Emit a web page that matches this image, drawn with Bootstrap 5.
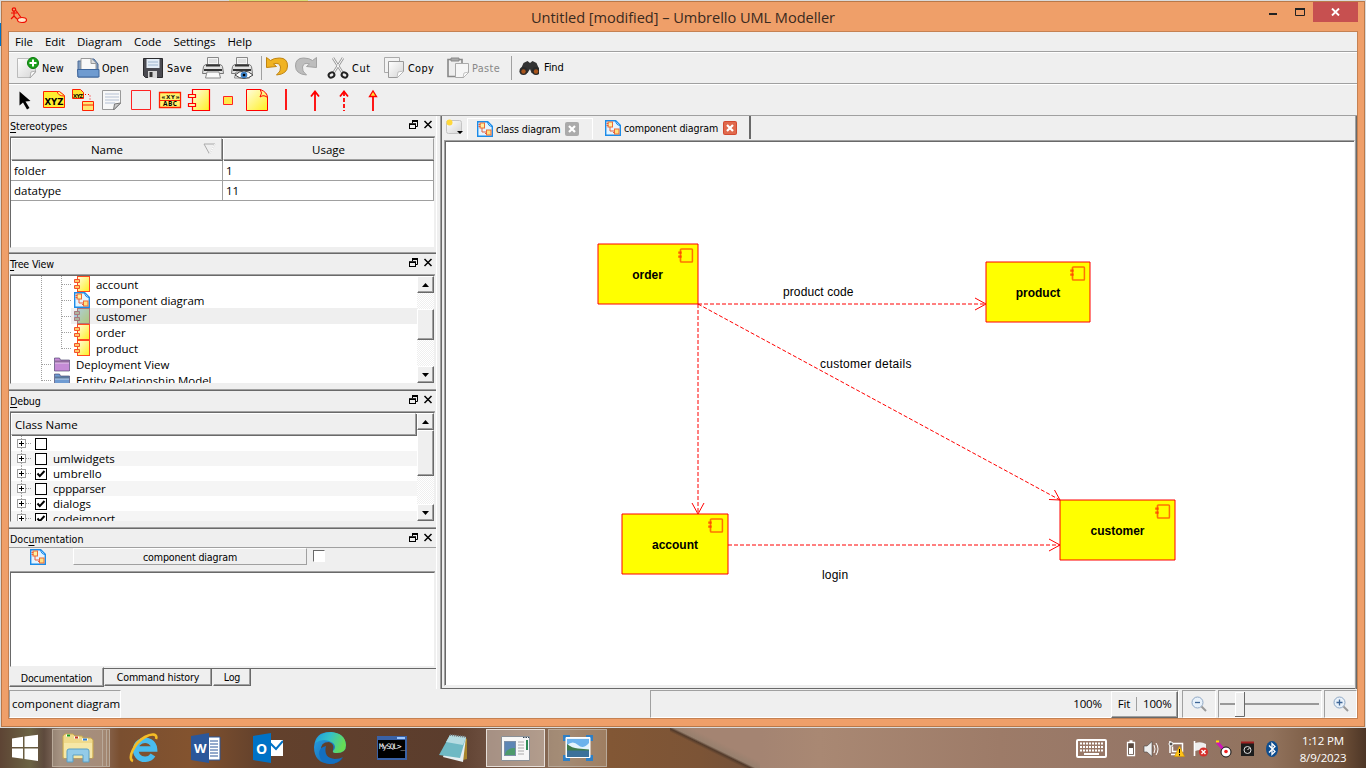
<!DOCTYPE html>
<html lang="en">
<head>
<meta charset="utf-8">
<title>Untitled [modified] – Umbrello UML Modeller</title>
<link href="https://cdn.jsdelivr.net/npm/bootstrap@5.3.0/dist/css/bootstrap.min.css" rel="stylesheet">
<script src="https://cdn.jsdelivr.net/npm/bootstrap@5.3.0/dist/js/bootstrap.bundle.min.js"></script>
<style>
:root{--face:#efefef;--sh:#a0a0a0;--dk:#696969}
html,body{width:1366px;height:768px;overflow:hidden}
body{font:11.5px/16px "Open Sans","Noto Sans",sans-serif;color:#000;background:#d9dadb;white-space:nowrap}
svg{display:block;flex:none}
.tah{font-family:"DejaVu Sans Condensed","DejaVu Sans",sans-serif;font-stretch:condensed;font-size:10.6px;letter-spacing:-.15px}
.desk{height:728px;padding:1px 1px 1px 1px;background:linear-gradient(#0072c6,#0072c6) 0 23px/1px 23px no-repeat,linear-gradient(#d6dd74,#d6dd74) 229px 0/79px 1px no-repeat,#d9dadb}
.win{width:1364px;height:726px;background:#ef9f69;border:1px solid #b97849}
.titlebar{height:29px}
.titletext{font-size:14.6px;color:#3a2a20;letter-spacing:-.05px}
.closebtn{width:45px;height:20px;background:#c75050}
.client{width:1350px;height:688px;margin-left:6px;background:var(--face);border:1px solid #c58152}
.menu-row{height:21px;border-bottom:1px solid #fff;box-shadow:inset 0 -1px var(--sh);letter-spacing:-.08px}
.tool-row{height:32px;border-bottom:1px solid #fff;box-shadow:inset 0 -1px var(--sh)}
.tool-row2{height:31px;border-bottom:1px solid var(--sh)}
.menu-row span{margin-right:12px}
.dock{width:428px;border-right:1px solid #fff}
.dock-title{height:19px;padding:0 3px 0 1px}
.dock-title u{text-underline-offset:2px}
.panel{border-bottom:1px solid var(--dk);box-shadow:inset 0 -1px var(--sh)}
.sunk{border:1px solid;border-color:var(--dk) #efefef #efefef var(--dk);background:#fff;margin:0 1px 0 1px;overflow:hidden;box-shadow:0 -1px var(--sh)}
.hdr{background:var(--face);border:1px solid;border-color:#fff var(--sh) var(--sh) #fff;box-shadow:1px 1px var(--dk)}
.cellx{border-right:1px solid var(--sh);border-bottom:1px solid var(--sh);height:20px;padding-left:3px;line-height:19px}
.sbar{width:17px;background:repeating-conic-gradient(#fff 0 25%,#efefef 0 50%) 0 0/2px 2px}
.raised{background:var(--face);border:1px solid;border-color:#fff var(--dk) var(--dk) #fff;box-shadow:inset -1px -1px var(--sh)}
.sbtn{width:17px;height:17px}
.tree-rows{letter-spacing:-.03px}
.trow{height:16px}
.trow span{padding:1px 0 0 6px}
.drow{height:15px}
.drow:nth-child(even){background:#f5f5f5}
.dlab{padding-left:6px}
.chk{width:12px;height:12px;border:1px solid #000;background:#fff}
.dtab{border:1px solid;border-color:transparent var(--dk) var(--dk) transparent;box-shadow:inset -1px -1px var(--sh);line-height:16px;text-align:center}
.work{border-left:1px solid var(--sh);border-right:1px solid var(--dk);box-shadow:inset 1px 0 var(--dk),inset -1px 0 var(--sh),inset 0 -1px var(--dk);width:917px}
.canvas{width:911px;height:546px;border:1px solid;border-color:var(--sh) #efefef #efefef var(--sh);box-shadow:inset 1px 1px var(--dk);background:#fff;padding:1px}
.stat{border:1px solid;border-color:var(--sh) #fff #fff var(--sh);height:28px}
.taskbar{height:40px;color:#fff;background:
 linear-gradient(26deg,transparent 0 43%,#523a2a 47%,#97806e 50%,#a48472 60%) 670px 0/90px 40px no-repeat,
 linear-gradient(90deg,#5d4434 0,#6c6344 30px,#5e4a3d 44px,#8b7465 60px,#8d6d5a 100px,#7a4f30 120px,#83532f 190px,#63412c 260px,#5b3d2d 450px,#6e5040 490px,#8a6c55 560px,#825735 610px,#7c5436 700px,#71503a 760px,#a48472 760px,#a98873 820px,#9d7b68 1000px,#937566 1180px,#92735d 1270px,#705139 1340px,#4d3626 1366px)}
.app{width:60px;height:40px;margin-right:2px}
.run-on{border:1px solid #e6ded8;background:rgba(235,225,215,.45)}
.run-off{border:1px solid #b9a999;background:rgba(225,215,195,.3)}
.clock{font-size:11.5px;line-height:17px;width:60px;letter-spacing:-.15px}
</style>
</head>
<body>
<svg width="0" height="0" class="position-absolute">
 <defs>
  <linearGradient id="yl" x1="0" y1="0" x2="1" y2="1"><stop offset="0" stop-color="#fffce0"/><stop offset="1" stop-color="#fff020"/></linearGradient>
  <linearGradient id="pg" x1="0" y1="0" x2="1" y2="1"><stop offset="0" stop-color="#fff"/><stop offset="1" stop-color="#d4d4d4"/></linearGradient>
  <linearGradient id="edg" x1="0" y1="0" x2="1" y2="1"><stop offset="0" stop-color="#2aa5e8"/><stop offset="1" stop-color="#0b54a0"/></linearGradient>
  <linearGradient id="edg2" x1="0" y1="0" x2="1" y2=".3"><stop offset="0" stop-color="#1b9de0"/><stop offset=".5" stop-color="#35c1c8"/><stop offset="1" stop-color="#66dd55"/></linearGradient>
  <symbol id="comp" viewBox="0 0 16 16"><rect x="3.500" y=".5" width="12" height="15" fill="url(#yl)" stroke="#ff4a20"/><path d="M.5 3.500h5v3h-5zM.5 9.500h5v3h-5z" fill="#ffc86a" stroke="#f4502a"/></symbol>
  <symbol id="cdiag" viewBox="0 0 16 16"><path d="M.7.7h10l4.600 4.600v10H.7z" fill="#e4f4ff" stroke="#1b8be8" stroke-width="1.400"/><path d="M10.500.5q.5 5 5 5l-5-5" fill="#9fd4ff" stroke="#1b8be8"/><rect x="3" y="2" width="4.500" height="5" fill="#fff0a0" stroke="#ee6a35"/><rect x="9.500" y="9" width="4.500" height="5" fill="#ffe080" stroke="#ee6a35"/><path d="M1.500 3.500h2M1.500 5.500h2M5 7v4h4M8 12.500h2" stroke="#e8603c" fill="none"/></symbol>
  <symbol id="dockbtns" viewBox="0 0 24 10"><path d="M3.500 3V1.500h5v5H7" fill="none" stroke="#000"/><path d="M3 1h6" stroke="#000" stroke-width="2"/><rect x=".5" y="4" width="6" height="4.500" fill="#efefef" stroke="#000"/><path d="M0 4.200h7" stroke="#000" stroke-width="1.600"/><path d="M15.500 1l7 7m0-7l-7 7" stroke="#000" stroke-width="1.500"/></symbol>
  <symbol id="plus" viewBox="0 0 24 15"><path d="M4.500 0v15M9 7.500h5" stroke="#a0a0a0" stroke-dasharray="1 1"/><rect x=".5" y="3.500" width="8" height="8" fill="#fff" stroke="#a0a0a0"/><path d="M2 7.500h5M4.500 5v5" stroke="#000"/></symbol>
  <symbol id="tick" viewBox="0 0 10 10"><path d="M1.500 4.500l2.300 2.600L8.500 2" fill="none" stroke="#000" stroke-width="2"/></symbol>
  <symbol id="up" viewBox="0 0 7 4"><path d="M3.500 0L7 4H0z"/></symbol>
  <symbol id="dn" viewBox="0 0 7 4"><path d="M3.500 4L7 0H0z"/></symbol>
  <symbol id="printer" viewBox="0 0 22 22"><path d="M5.500 .5h11v9h-11z" fill="#f4f4f4" stroke="#888"/><path d="M7 3h8M7 5h8" stroke="#ccc"/><path d="M1.500 9.500q1-2 3-2h13q2 0 3 2l1 7H.5z" fill="#e2e2e2" stroke="#777"/><path d="M4 8.500h14M2 13h18" stroke="#333" stroke-width="2"/><path d="M5 15h12l1.500 6H3.500z" fill="#fafafa" stroke="#888"/></symbol>
  <symbol id="fold" viewBox="0 0 16 15"><path d="M.5 14.500V1.500h5l1 2h9v11z" fill="currentColor" stroke="#3d3560" stroke-opacity=".6"/><path d="M1 6.500h14" stroke="#fff" stroke-opacity=".55"/><path d="M1 5h14" stroke="#333" stroke-opacity=".35" stroke-width="2"/></symbol>
  <symbol id="cnode" viewBox="0 0 16 15"><path d="M4 1h10q1 0 1 1v11q0 1-1 1H4q-1 0-1-1V2q0-1 1-1z" fill="none" stroke="red" stroke-opacity=".55" stroke-width="1.700"/><path d="M.7 3.500h3.500v2.200H.7zM.7 7.500h3.500v2.200H.7z" fill="#ff4000" fill-opacity=".8"/></symbol>
 </defs>
</svg>

<div class="desk">
<div class="win">
 <div class="titlebar d-flex align-items-start">
  <svg width="18" height="18" viewBox="0 0 18 18" style="margin:5px 0 0 8px" fill="none" stroke="#f00c00" stroke-width="1.200"><circle cx="4" cy="2.500" r="1.700"/><path d="M4 4v5M1 6h6M4 9l-3 3M4 9l3 3M6 3.500l5 7"/><ellipse cx="12" cy="13" rx="4.500" ry="2.500" fill="#ffe3c8"/></svg>
  <div class="titletext flex-grow-1 text-center" style="margin:7px 0 0 71px">Untitled [modified] – Umbrello UML Modeller</div>
  <svg width="46" height="20" viewBox="0 0 46 20"><path d="M2 12h8" stroke="#222" stroke-width="2"/><path d="M28.500 6.500h9v7h-9z" fill="none" stroke="#222"/><path d="M28 7h10" stroke="#222" stroke-width="2"/></svg>
  <div class="closebtn d-flex align-items-center justify-content-center" style="margin:0 6px 0 0"><svg width="9" height="8" viewBox="0 0 9 8"><path d="M1 .5l7 7m0-7l-7 7" stroke="#fff" stroke-width="1.900"/></svg></div>
 </div>

 <div class="client d-flex flex-column">
  <div class="menu-row d-flex" style="padding:2px 0 0 6px"><span>File</span><span>Edit</span><span>Diagram</span><span>Code</span><span>Settings</span><span>Help</span></div>

  <div class="tool-row d-flex align-items-center tah">
   <svg width="530" height="30" viewBox="9 54 530 30">
    <path d="M17.500 58.500h18v14l-5 5h-13z" fill="url(#pg)" stroke="#bbb"/><path d="M30 78l1-6 5-1z" fill="#fff" stroke="#999" stroke-width=".7"/><circle cx="33" cy="63" r="5.500" fill="#1ca01c" stroke="#0a7a0a"/><path d="M29.500 63h7M33 59.500v7" stroke="#fff" stroke-width="2"/>
    <path d="M78 77V61h8v-2h8l4 5v13z" fill="#7f9cc0" stroke="#4d6b96"/><path d="M81 70V58.500h10l5 5V70z" fill="#f8f8f8" stroke="#999"/><path d="M91 58.500v5h5" fill="#ddd" stroke="#999"/><path d="M77.500 69.500H99V77H78z" fill="#6f9bd0" stroke="#3d659c"/>
    <path d="M143.500 58.500h19v19h-17l-2-2z" fill="#4a4a50" stroke="#2b2b2e"/><path d="M146.500 59h13v9h-13z" fill="#e4edf6"/><path d="M148 62h10M148 65h10" stroke="#9eb4cc"/><path d="M148 71h9v7h-9z" fill="#d7d7d7"/><path d="M149.500 72h3v5h-3z" fill="#333"/>
    <use href="#printer" x="202" y="57" width="22" height="22"/><use href="#printer" x="231" y="57" width="22" height="22"/><path d="M235 75q9-8 18 0-9 7-18 0z" fill="#fff" stroke="#444"/><circle cx="244" cy="75" r="3.300" fill="#3b7fc4"/><circle cx="244" cy="75" r="1.300"/>
    <path d="M261.500 56v24M511.500 56v24" stroke="#a0a0a0"/>
    <path d="M266.500 57.500v10l10-1-3-2.500q6-2 7 3 1 4-4 8 11-1 11-9 0-8-8-8-6 0-9 2.500z" fill="#f0b323" stroke="#c08410"/>
    <path d="M316.500 57.500v10l-10-1 3-2.500q-6-2-7 3-1 4 4 8-11-1-11-9 0-8 8-8 6 0 9 2.500z" fill="#bdbdbd" stroke="#a2a2a2"/>
    <path d="M333 58l9 14M343 58l-9 14" stroke="#999" stroke-width="2.600"/><path d="M333 58l9 14M343 58l-9 14" stroke="#fff" stroke-width="1"/><g fill="none" stroke="#222" stroke-width="2"><ellipse cx="331.500" cy="75" rx="3" ry="2.400" transform="rotate(-30 331.500 75)"/><ellipse cx="344.500" cy="75" rx="3" ry="2.400" transform="rotate(30 344.500 75)"/></g>
    <path d="M384.500 57.500h15v15h-15z" fill="#f3f3f3" stroke="#aaa"/><path d="M388.500 61.500h15v10l-6 6h-9z" fill="url(#pg)" stroke="#999"/><path d="M397 78l1-6 6-1z" fill="#fff" stroke="#aaa" stroke-width=".7"/>
    <path d="M448 59.500h14v17h-14z" fill="#eee" stroke="#888" stroke-width="1.600"/><path d="M451 58h8v3h-8z" fill="#aaa" stroke="#888"/><path d="M455.500 63.500h13v9l-5 5h-8z" fill="#f6f6f6" stroke="#aaa"/><path d="M463 78l1-5 5-1z" fill="#fff" stroke="#aaa" stroke-width=".7"/>
    <path d="M519.500 72l4-9 4-2 2.500 2 2.500-2 4 2 4 9-4 2-5-1-1.500-4-2.500 4z" fill="#333"/><circle cx="523.500" cy="71" r="4" fill="#2a2a2a"/><circle cx="536" cy="71" r="4" fill="#2a2a2a"/><circle cx="523.500" cy="71.500" r="2.200" fill="#a8541c"/><circle cx="536" cy="71.500" r="2.200" fill="#a8541c"/>
    <g font-size="10.800"><text x="42" y="72" textLength="21.500">New</text><text x="102" y="72" textLength="26.500">Open</text><text x="167" y="72" textLength="24.500">Save</text><text x="352" y="72" textLength="18">Cut</text><text x="408" y="72" textLength="25.500">Copy</text><text x="472" y="72" textLength="27.500" fill="#888">Paste</text></g>
   </svg>
   <span style="margin:0 0 1px 5px;font-size:11px">Find</span>
  </div>

  <div class="tool-row2 d-flex align-items-center">
   <svg width="380" height="30" viewBox="9 85 380 30">
    <path d="M19.500 91.500v14l3.500-3 4 7 2.500-1.500-4-6.500 5-.5z"/>
    <path d="M43.500 91.500h16l5 4v12h-21z" fill="#ffee30" stroke="#ff2000"/><path d="M57 91q1 5 7 5" fill="#fff6a0" stroke="#ff2000"/><text x="44.500" y="105" font-size="9.500" font-weight="bold" textLength="19" lengthAdjust="spacingAndGlyphs" font-family="DejaVu Sans">XYZ</text>
    <path d="M72.500 89.500h8l3 3v6h-11z" fill="#ffe030" stroke="#ff2000"/><text x="73" y="97.500" font-size="6" font-weight="bold" textLength="10">XYZ</text><path d="M85 94.500h5v7" fill="none" stroke="red" stroke-dasharray="1 2"/><path d="M82.500 101.500h11v9h-11zM83 105h11" fill="#ffe570" stroke="#ff2000"/>
    <path d="M102.500 90.500h18v13l-6 6h-12z" fill="#f8f8f8" stroke="#999"/><path d="M105 94h14M105 97h14M105 100h14M105 103h10" stroke="#b4c0d4"/><path d="M113.500 110l1-6 6-1z" fill="#ccc" stroke="#777"/>
    <path d="M131.500 90.500h19v19h-19z" fill="none" stroke="#f22"/>
    <path d="M159.500 92.500h21v15h-21z" fill="#fff26a" stroke="#ff2000" stroke-width="1.300"/><path d="M160 100.500h21" stroke="#ff2000"/><text x="161.500" y="98.500" font-size="6" font-weight="bold" textLength="18">«XY»</text><text x="163" y="106" font-size="6.500" font-weight="bold" textLength="14">ABC</text>
    <path d="M192.500 89.500h17v21h-17z" fill="url(#yl)" stroke="#f00" stroke-width="1.200"/><path d="M188.500 94.500h7v3h-7zM188.500 103.500h7v3h-7z" fill="#fff5b0" stroke="#f00" stroke-width="1.200"/>
    <path d="M223.500 96.500h9v8h-9z" fill="#ffe94a" stroke="#f22"/>
    <path d="M246.500 89.500h14q7 3 7 8v13h-21z" fill="url(#yl)" stroke="#f00"/><path d="M260 89q3 4 0 8 4-3 8 1" fill="none" stroke="#f00"/>
    <g stroke="#f00" stroke-width="1.800" fill="none"><path d="M286 89v21M315 92v19M311 96.500l4-5 4 5M340 96.500l4-5 4 5M373 96v15"/><path d="M344 92v19" stroke-dasharray="4 2"/><path d="M369.500 96.500h7l-3.500-5.500z" fill="#ffe53a" stroke-width="1.300"/></g>
   </svg>
  </div>

  <div class="d-flex" style="height:573px">
   <div class="dock d-flex flex-column">
    <section class="panel" style="height:138px">
     <div class="dock-title d-flex justify-content-between tah"><span style="padding-top:2px;letter-spacing:-.02px"><u>S</u>tereotypes</span><svg width="24" height="10" class="mt-1"><use href="#dockbtns"/></svg></div>
     <div class="sunk" style="height:111px;margin-top:2px">
      <div class="d-flex text-center" style="height:23px;line-height:21px">
       <div class="hdr position-relative" style="width:211px;height:22px;padding-right:19px">Name<svg class="position-absolute" style="right:5px;top:4px" width="13" height="12"><path d="M1 1h11L6.500 11z" fill="none" stroke="#aaa"/><path d="M12 1L6.500 11" stroke="#fff"/></svg></div>
       <div class="hdr" style="width:211px;height:22px;margin-left:1px">Usage</div>
      </div>
      <div class="d-flex"><div class="cellx" style="width:212px">folder</div><div class="cellx" style="width:211px">1</div></div>
      <div class="d-flex"><div class="cellx" style="width:212px">datatype</div><div class="cellx" style="width:211px">11</div></div>
     </div>
    </section>
    <section class="panel" style="height:137px">
     <div class="dock-title d-flex justify-content-between tah"><span style="padding-top:2px"><u>T</u>ree View</span><svg width="24" height="10" class="mt-1"><use href="#dockbtns"/></svg></div>
     <div class="sunk d-flex" style="height:109px;margin-top:2px">
      <svg width="60" height="107" viewBox="11 276 60 107"><path d="M41.500 276v106M42 364.500h9M42 380.500h9M61.500 276v73M62 284.500h9M62 300.500h9M62 316.500h9M62 332.500h9M62 348.500h9" fill="none" stroke="#a0a0a0" stroke-dasharray="1 1"/></svg>
      <div class="flex-grow-1 tree-rows">
       <div class="trow d-flex"><svg width="16" height="16" style="margin-left:3px"><use href="#comp"/></svg><span>account</span></div>
       <div class="trow d-flex"><svg width="16" height="16" style="margin-left:3px"><use href="#cdiag"/></svg><span>component diagram</span></div>
       <div class="trow d-flex" style="background:#efefef"><svg width="16" height="16" style="margin-left:3px"><use href="#comp"/><path d="M0 3h3V0h13v16H3v-3H0z" fill="#5fa0d0" fill-opacity=".5"/></svg><span>customer</span></div>
       <div class="trow d-flex"><svg width="16" height="16" style="margin-left:3px"><use href="#comp"/></svg><span>order</span></div>
       <div class="trow d-flex"><svg width="16" height="16" style="margin-left:3px"><use href="#comp"/></svg><span>product</span></div>
       <div class="trow d-flex" style="margin-left:-17px"><svg width="16" height="16" style="color:#c58bd6"><use href="#fold"/></svg><span>Deployment View</span></div>
       <div class="trow d-flex" style="margin-left:-17px"><svg width="16" height="16" style="color:#6f9bd2"><use href="#fold"/></svg><span>Entity Relationship Model</span></div>
      </div>
      <div class="sbar d-flex flex-column">
       <div class="raised sbtn d-flex align-items-center justify-content-center"><svg width="7" height="4"><use href="#up"/></svg></div>
       <div class="raised" style="height:31px;margin-top:16px"></div>
       <div class="raised sbtn d-flex align-items-center justify-content-center mt-auto"><svg width="7" height="4"><use href="#dn"/></svg></div>
      </div>
     </div>
    </section>
    <section class="panel" style="height:138px">
     <div class="dock-title d-flex justify-content-between tah"><span style="padding-top:2px"><u>D</u>ebug</span><svg width="24" height="10" class="mt-1"><use href="#dockbtns"/></svg></div>
     <div class="sunk d-flex" style="height:110px;margin-top:2px">
      <div class="flex-grow-1">
       <div class="hdr" style="height:22px;line-height:21px;padding-left:3px;margin:0 1px 1px 0">Class Name</div>
       <div>
        <div class="drow d-flex align-items-center" style="padding-left:6px"><svg width="18" height="15"><use href="#plus" width="24" height="15"/></svg><span class="chk"></span></div>
        <div class="drow d-flex align-items-center" style="padding-left:6px"><svg width="18" height="15"><use href="#plus" width="24" height="15"/></svg><span class="chk"></span><span class="dlab">umlwidgets</span></div>
        <div class="drow d-flex align-items-center" style="padding-left:6px"><svg width="18" height="15"><use href="#plus" width="24" height="15"/></svg><span class="chk"><svg width="10" height="10"><use href="#tick"/></svg></span><span class="dlab">umbrello</span></div>
        <div class="drow d-flex align-items-center" style="padding-left:6px"><svg width="18" height="15"><use href="#plus" width="24" height="15"/></svg><span class="chk"></span><span class="dlab" style="letter-spacing:-.2px">cppparser</span></div>
        <div class="drow d-flex align-items-center" style="padding-left:6px"><svg width="18" height="15"><use href="#plus" width="24" height="15"/></svg><span class="chk"><svg width="10" height="10"><use href="#tick"/></svg></span><span class="dlab">dialogs</span></div>
        <div class="drow d-flex align-items-center" style="padding-left:6px"><svg width="18" height="15"><use href="#plus" width="24" height="15"/></svg><span class="chk"><svg width="10" height="10"><use href="#tick"/></svg></span><span class="dlab">codeimport</span></div>
       </div>
      </div>
      <div class="sbar d-flex flex-column">
       <div class="raised sbtn d-flex align-items-center justify-content-center"><svg width="7" height="4"><use href="#up"/></svg></div>
       <div class="raised" style="height:46px"></div>
       <div class="raised sbtn d-flex align-items-center justify-content-center mt-auto"><svg width="7" height="4"><use href="#dn"/></svg></div>
      </div>
     </div>
    </section>
    <section class="flex-grow-1 d-flex flex-column tah">
     <div class="dock-title d-flex justify-content-between" style="border-bottom:1px solid var(--sh)"><span style="padding-top:2px;letter-spacing:0">Doc<u>u</u>mentation</span><svg width="24" height="10" class="mt-1"><use href="#dockbtns"/></svg></div>
     <div class="d-flex" style="height:22px;padding-left:21px">
      <svg width="16" height="16" style="margin-top:1px"><use href="#cdiag"/></svg>
      <div class="text-center" style="margin-left:27px;width:234px;height:17px;border:1px solid;border-color:#fff var(--sh) var(--sh) #fff">component diagram</div>
      <div style="margin:2px 0 0 6px;width:12px;height:12px;background:#fff;border:1px solid;border-color:var(--dk) #fff #fff var(--dk)"></div>
     </div>
     <div class="sunk" style="height:95px;margin-top:2px"></div>
     <div class="d-flex" style="height:20px;background:linear-gradient(var(--dk),var(--dk)) 94px 1px/333px 1px no-repeat">
      <div class="dtab" style="width:95px;height:20px;line-height:20px;background:var(--face)">Documentation</div>
      <div class="dtab" style="width:108px;height:18px;margin-top:1px">Command history</div>
      <div class="dtab" style="width:38px;height:18px;margin:1px 0 0 1px">Log</div>
     </div>
    </section>
   </div>

   <div class="work ms-auto d-flex flex-column" style="padding-left:3px">
    <div class="d-flex tah" style="height:24px">
     <svg width="23" height="20" viewBox="443 116 23 20"><rect x="445.500" y="120.500" width="15" height="13" rx="2" fill="url(#pg)" stroke="#c4c4c4"/><circle cx="448.500" cy="122.500" r="3" fill="#ffd83a"/><path d="M456 131h6l-3 3z"/></svg>
     <div class="d-flex align-items-center" style="width:126px;height:21px;margin-top:2px;border:1px solid #fff;border-bottom:0;padding-left:9px"><svg width="16" height="16" style="margin-bottom:1px"><use href="#cdiag"/></svg><span style="margin:0 5px 0 3px;width:64px">class diagram</span><svg width="14" height="14"><rect width="14" height="14" rx="2" fill="#aaa"/><path d="M4 4l6 6m0-6l-6 6" stroke="#fff" stroke-width="2.200"/></svg></div>
     <div class="d-flex align-items-center" style="width:158px;height:23px;border-right:2px solid var(--dk);padding-left:12px"><svg width="16" height="16"><use href="#cdiag"/></svg><span style="margin:1px 5px 0 3px">component diagram</span><svg width="14" height="14"><rect width="14" height="14" rx="2" fill="#d2492f"/><rect x="1" y="1" width="12" height="12" rx="1" fill="#e0694c"/><path d="M4 4l6 6m0-6l-6 6" stroke="#fff" stroke-width="2.200"/></svg></div>
    </div>
    <div class="canvas">
     <svg width="907" height="542" viewBox="446 142 907 542" font-family="Liberation Sans, sans-serif" font-size="12">
      <g stroke="#f00" fill="none"><g stroke-dasharray="4 2"><path d="M698 304H985M698 304V513M698 304L1060 500M728 545H1060"/></g><path d="M975 298l11 6-11 6M692 503l6 11 6-11M1049 539l11 6-11 6M1054.500 490l5.500 10-11-.5"/></g>
      <g stroke="#f00" fill="#ff0"><path d="M598 244h100v60H598zM986 262h104v60H986zM622 514h106v60H622zM1060 500h115v60h-115z"/></g>
      <use href="#cnode" x="677.500" y="248" width="16" height="15"/><use href="#cnode" x="1069.500" y="266" width="16" height="15"/><use href="#cnode" x="707.500" y="518" width="16" height="15"/><use href="#cnode" x="1154.500" y="504" width="16" height="15"/>
      <g font-weight="bold" text-anchor="middle"><text x="647.500" y="279">order</text><text x="1038" y="297">product</text><text x="675" y="549">account</text><text x="1117.500" y="535">customer</text></g>
      <text x="783" y="296" letter-spacing=".1">product code</text><text x="820" y="368" letter-spacing=".27">customer details</text><text x="822" y="579" letter-spacing=".2">login</text>
     </svg>
    </div>
   </div>
  </div>

  <div class="d-flex" style="height:29px;padding-top:1px">
   <div class="stat" style="width:113px;padding:5px 0 0 2px;letter-spacing:-.05px">component diagram</div>
   <div class="stat d-flex align-items-center" style="width:529px;margin-left:529px;padding-left:422px;letter-spacing:-.2px">100%<div class="raised d-flex align-items-center justify-content-center" style="width:68px;height:27px;margin-left:9px">Fit<span style="width:1px;height:14px;background:var(--sh);margin:0 6px"></span>100%</div></div>
   <div class="stat d-flex align-items-center justify-content-center" style="width:34px;margin-left:3px"><svg width="16" height="16" fill="none"><circle cx="6.500" cy="6.500" r="5.500" fill="#e8f1fa" stroke="#8ea7c4"/><path d="M4 6.500h5" stroke="#3d6596" stroke-width="1.300"/><path d="M10.500 10.500l4.500 4.500" stroke="#999" stroke-width="2"/></svg></div>
   <div class="stat d-flex align-items-center" style="width:104px;margin-left:2px"><svg width="102" height="26"><path d="M1 13h99" stroke="#999" stroke-width="2"/><path d="M16 1h10v24H16z" fill="#efefef"/><path d="M16.500 25V1.500H25" stroke="#fff" fill="none"/><path d="M25.500 1v24.500H16" stroke="#696969" fill="none"/></svg></div>
   <div class="stat d-flex align-items-center justify-content-center" style="width:33px;margin-left:2px"><svg width="16" height="16" fill="none"><circle cx="6.500" cy="6.500" r="5.500" fill="#e8f1fa" stroke="#8ea7c4"/><path d="M3.500 6.500h6M6.500 3.500v6" stroke="#3d6596" stroke-width="1.300"/><path d="M10.500 10.500l4.500 4.500" stroke="#999" stroke-width="2"/></svg></div>
  </div>
 </div>
</div>
</div>

<div class="taskbar d-flex align-items-center">
 <svg width="50" height="40"><path d="M12 10.500l11-1.700V19H12zM24.500 8.600L38 6.700V19H24.500zM12 20.500h11v10.300L12 29.200zM24.500 20.500H38V33l-13.500-2z" fill="#fff"/></svg>
 <div class="d-flex" style="margin:0 4px 0 2px;height:38px"><div class="run-off d-flex align-items-center justify-content-center" style="width:51px"><svg width="32" height="30" viewBox="0 0 32 30"><path d="M1 25V3l2-2h8l2 2h7l1 2h8l2 2v18z" fill="#efd98a" stroke="#c9a94e"/><path d="M4 2.500h4M12 4.500h5M20 6.500h6" stroke-width="2" stroke="#fff"/><path d="M5 2.500h3" stroke="#1b9b1b" stroke-width="2"/><path d="M13 4.500h3" stroke="#c43a2a" stroke-width="2"/><path d="M21 6.500h4" stroke="#2f7fd0" stroke-width="2"/><path d="M2 10h28v15H2z" fill="#f6e7a6"/><path d="M5 29V18q0-2 2-2h18q2 0 2 2v11h-6v-7H11v7z" fill="#93cbe8" stroke="#5a9fc4"/></svg></div><div class="run-off" style="width:4px;border-left:0"></div><div class="run-off" style="width:3px;border-left:0"></div></div>
 <div class="app d-flex align-items-center justify-content-center"><svg width="32" height="32" viewBox="0 0 32 32"><path d="M25 23A9.500 9.500 0 1 1 26.500 17H9" fill="none" stroke="#49bcee" stroke-width="5.500"/><path d="M5 29C-1 27 6 11 17 5c7-4 13-3 11 2" fill="none" stroke="#f5bd26" stroke-width="2.600"/></svg></div>
 <div class="app d-flex align-items-center justify-content-center"><svg width="30" height="30" viewBox="0 0 30 30"><path d="M17 4h12v23H17z" fill="#fff" stroke="#2b579a"/><path d="M19 8h8M19 11h8M19 14h8M19 17h8M19 20h8M19 23h8" stroke="#2b579a"/><path d="M0 3l18-3v30L0 27z" fill="#2b579a"/><text x="3" y="20" fill="#fff" font-size="13" font-weight="bold">W</text></svg></div>
 <div class="app d-flex align-items-center justify-content-center"><svg width="30" height="30" viewBox="0 0 30 30"><path d="M16 7h14v16H16z" fill="#fff"/><path d="M17 10l6 6 7-8" fill="none" stroke="#0072c6" stroke-width="2"/><path d="M0 3l18-3v30L0 27z" fill="#0072c6"/><text x="3" y="20.500" fill="#fff" font-size="14" font-weight="bold">O</text></svg></div>
 <div class="app d-flex align-items-center justify-content-center"><svg width="32" height="32" viewBox="0 0 32 32"><path d="M0 15Q1 0 16 0q15 1 16 13 0 8-9 8-5 0-4-3 2-6-4-8-9 0-8 9 2 10 13 10 5 0 9-3-5 6-13 6Q0 31 0 15z" fill="url(#edg)"/><path d="M1 11Q5 0 17 0q14 1 15 13 0 8-9 8-5 0-4-2 4-4 0-8-9-6-18 0z" fill="url(#edg2)"/><path d="M12 14q-3 12 9 13 5 0 8-2-5 7-13 7-10-1-11-10 0-7 7-8z" fill="#136fc0"/></svg></div>
 <div class="app d-flex align-items-center justify-content-center"><svg width="30" height="24" viewBox="0 0 30 24"><path d="M0 0h30v24H0z" fill="#3a62a6"/><path d="M1 4h27v18H1z" fill="#000"/><path d="M20 2h8" stroke="#9cc7ff" stroke-width="2"/><text x="2" y="13" font-family="DejaVu Sans Mono" font-size="7.500" textLength="26" fill="#fff">MySQL&gt;_</text></svg></div>
 <div class="app d-flex align-items-center justify-content-center"><svg width="32" height="30" viewBox="0 0 32 30"><path d="M26 4l3 2v20l-4 1z" fill="#a8842a"/><path d="M12 2l16 2-3 25-20-5z" fill="#e6eef0"/><path d="M12 2l16 2-6 21-21-3z" fill="#6fb9c4"/><path d="M12 2l16 2-3 8-17-3z" fill="#b6dce2"/><path d="M12 2l16 2" stroke="#777" stroke-width="2" stroke-dasharray="1 1"/></svg></div>
 <div class="app d-flex align-items-center"><div class="run-on d-flex align-items-center justify-content-center" style="width:59px;height:38px"><svg width="30" height="25" viewBox="0 0 30 25"><path d="M.5.500h28v24H.5z" fill="#f7f7f7" stroke="#8a9097"/><path d="M3 5h12v15H3z" fill="#7d8fa8"/><path d="M4 6h10v7L4 18z" fill="#5d86b5"/><path d="M4 18q3-7 10-6v7H4z" fill="#4d9a6c"/><path d="M17 6h6M17 9h6M17 12h6M17 15h6M17 18h6" stroke="#aaa"/><path d="M26 4v10" stroke="#2e8b57" stroke-width="2"/><path d="M22 1.500h6" stroke="#345" stroke-dasharray="1.500 1"/></svg></div></div>
 <div class="app d-flex align-items-center"><div class="run-off d-flex align-items-center justify-content-center" style="width:59px;height:38px"><svg width="30" height="26" viewBox="0 0 30 26"><path d="M0 0h7v6H0zM23 0h7v6h-7zM0 20h7v6H0zM23 20h7v6h-7z" fill="#2f7fc4"/><path d="M3 2.500h24v20H3z" fill="#eaf4fb" stroke="#fff"/><path d="M4 4h22v9H4z" fill="#6cb2ec"/><path d="M4 10q6-5 11 0t11-2v6H4z" fill="#e4f3fc"/><path d="M4 16V9q5 4 11 4.500t11 1V16z" fill="#3f7a4a"/><path d="M4 15.500h22V22H4z" fill="#3c719a"/></svg></div></div>
 <svg width="215" height="30" viewBox="1074 733 215 30" style="margin-left:464px">
  <rect x="1077" y="740" width="29" height="17" rx="1" fill="none" stroke="#fff" stroke-width="2"/><path d="M1080 743.500h23M1080 747h23M1080 750.500h23" stroke="#fff" stroke-width="2" stroke-dasharray="2 1"/><path d="M1084 754h15" stroke="#fff" stroke-width="2"/>
  <path d="M1127.500 742.500h7v13h-7zM1129.500 741h3" fill="#5b4a40" stroke="#fff" stroke-width="1.300"/><path d="M1129 748h4v6h-4z" fill="#fff"/>
  <path d="M1144 746h3l5-4.500v15l-5-4.500h-3z" fill="#eee" stroke="#444" stroke-width=".6"/><path d="M1154 745q2 4 0 8M1156 743q4 6 0 12" fill="none" stroke="#fff"/>
  <path d="M1173 743.500h9.500v8h-10v-5M1170 741v12M1176 754.500h-5" fill="none" stroke="#fff" stroke-width="1.500"/><circle cx="1171" cy="744" r="2" fill="#555" stroke="#fff"/><path d="M1179.500 746l5 10.500h-10z" fill="#ffc419" stroke="#d29300" stroke-width=".6"/><path d="M1179.500 749v4M1179.500 754v1.500" stroke="#000"/>
  <path d="M1194.500 741v15" stroke="#fff" stroke-width="1.600"/><path d="M1195 743q6-2 11 1v7q-5-2-11 0z" fill="#eee"/><circle cx="1203.500" cy="752" r="4.600" fill="#d62f2a"/><path d="M1201.500 750l4 4m0-4l-4 4" stroke="#fff" stroke-width="1.400"/>
  <path d="M1217 742l7 8" stroke="#d013b8" stroke-width="3"/><path d="M1216 741.500h3" stroke="#fd0" stroke-width="2"/><circle cx="1226" cy="752" r="5" fill="#fff" stroke="#111"/><circle cx="1226" cy="751.500" r="1.800" fill="#f02020"/>
  <path d="M1241 742h13v14h-13z" fill="#1c1c1c"/><path d="M1241 742.500h13" stroke="#a02020" stroke-width="2"/><circle cx="1247.500" cy="750" r="3.500" fill="none" stroke="#ddd"/><path d="M1247.500 750l2-2" stroke="#fff"/>
  <ellipse cx="1272" cy="749" rx="6" ry="8" fill="#0d4d8f"/><path d="M1269 745.500l6 6-3 3v-11l3 3-6 6" fill="none" stroke="#fff" stroke-width="1.300"/>
 </svg>
 <div class="clock text-center" style="margin-left:4px;padding-top:2px">1:12 PM<br>8/9/2023</div>
</div>
</body>
</html>
